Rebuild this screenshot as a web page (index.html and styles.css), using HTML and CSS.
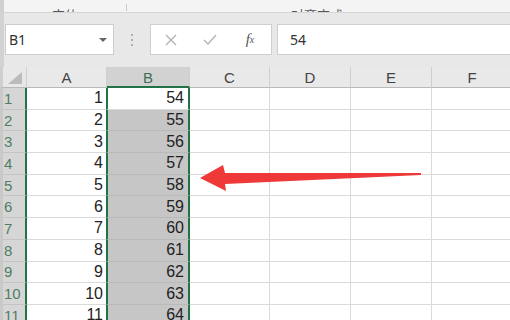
FILE: index.html
```html
<!DOCTYPE html>
<html>
<head>
<meta charset="utf-8">
<link rel="stylesheet" href="styles.css">
</head>
<body>
<div class="page">
  <div class="ribbon">
    <div class="grp grp1"><span>字体</span></div>
    <div class="rsep"></div>
    <div class="grp grp2"><span>对齐方式</span></div>
  </div>
  <div class="fbar">
    <div class="namebox"><span>B1</span><span class="caret"></span></div>
    <div class="dots"><i></i><i></i><i></i></div>
    <div class="btns">
      <span class="b b1">
        <svg width="12" height="12" viewBox="0 0 12 12"><path d="M1 1L11 11M11 1L1 11" stroke="#b3b3b3" stroke-width="1.4" fill="none"/></svg>
      </span>
      <span class="b b2">
        <svg width="14" height="11" viewBox="0 0 14 11"><path d="M1 6L5 10L13 1" stroke="#b3b3b3" stroke-width="1.4" fill="none"/></svg>
      </span>
      <span class="b b3 fx">f<sub>x</sub></span>
    </div>
    <div class="finput">54</div>
  </div>
  <div class="sheet">
    <div class="corner"><svg width="14" height="12" viewBox="0 0 14 12"><path d="M14 0L14 12L0 12Z" fill="#bcbcbc"/></svg></div>
    <div class="ch">A</div>
    <div class="ch sel">B</div>
    <div class="ch">C</div>
    <div class="ch">D</div>
    <div class="ch">E</div>
    <div class="ch">F</div>

    <div class="rh">1</div><div class="c">1</div><div class="c b act">54</div><div class="c"></div><div class="c"></div><div class="c"></div><div class="c"></div>
    <div class="rh">2</div><div class="c">2</div><div class="c b hl">55</div><div class="c"></div><div class="c"></div><div class="c"></div><div class="c"></div>
    <div class="rh">3</div><div class="c">3</div><div class="c b hl">56</div><div class="c"></div><div class="c"></div><div class="c"></div><div class="c"></div>
    <div class="rh">4</div><div class="c">4</div><div class="c b hl">57</div><div class="c"></div><div class="c"></div><div class="c"></div><div class="c"></div>
    <div class="rh">5</div><div class="c">5</div><div class="c b hl">58</div><div class="c"></div><div class="c"></div><div class="c"></div><div class="c"></div>
    <div class="rh">6</div><div class="c">6</div><div class="c b hl">59</div><div class="c"></div><div class="c"></div><div class="c"></div><div class="c"></div>
    <div class="rh">7</div><div class="c">7</div><div class="c b hl">60</div><div class="c"></div><div class="c"></div><div class="c"></div><div class="c"></div>
    <div class="rh">8</div><div class="c">8</div><div class="c b hl">61</div><div class="c"></div><div class="c"></div><div class="c"></div><div class="c"></div>
    <div class="rh">9</div><div class="c">9</div><div class="c b hl">62</div><div class="c"></div><div class="c"></div><div class="c"></div><div class="c"></div>
    <div class="rh">10</div><div class="c">10</div><div class="c b hl">63</div><div class="c"></div><div class="c"></div><div class="c"></div><div class="c"></div>
    <div class="rh">11</div><div class="c">11</div><div class="c b hl">64</div><div class="c"></div><div class="c"></div><div class="c"></div><div class="c"></div>
  </div>
  <svg class="arrow" width="510" height="320" viewBox="0 0 510 320">
    <polygon points="200,178 223,165 225,173 421,173 421,175 225,184 226,191" fill="#ef3838"/>
  </svg>
</div>
</body>
</html>
```
FILE: styles.css
```css
* { box-sizing: border-box; }
html, body { margin: 0; padding: 0; }
body {
  width: 510px;
  height: 320px;
  overflow: hidden;
  background: #e8e8e8;
  font-family: "Liberation Sans", Arial, sans-serif;
}
.page {
  position: relative;
  width: 510px;
  height: 320px;
  overflow: hidden;
}
.ribbon {
  height: 13px;
  display: flex;
  background: #f4f4f4;
  border-bottom: 1px solid #d5d5d5;
  border-left: 4px solid #cfcfcf;
  overflow: hidden;
}
.grp {
  display: flex;
  justify-content: center;
  align-items: flex-end;
  font-family: "Noto Sans CJK SC", sans-serif;
  font-size: 13px;
  color: #555;
  line-height: 13px;
}
.grp span { margin-bottom: -9px; }
.grp1 { width: 122px; }
.rsep { width: 1px; height: 7px; margin-top: 4px; background: #c9c9c9; }
.grp2 { width: 380px; }

.fbar {
  height: 54px;
  display: flex;
  align-items: flex-start;
  padding-top: 11px;
  border-left: 4px solid #d2d2d2;
  background: #e8e8e8;
}
.namebox {
  margin-left: 1px;
  width: 109px;
  height: 31px;
  background: #fff;
  border: 1px solid #cdcdcd;
  display: flex;
  align-items: center;
  justify-content: space-between;
  padding: 0 6px 0 3px;
  font-family: "Noto Sans", sans-serif;
  font-size: 14px;
  color: #333;
}
.caret {
  width: 0; height: 0;
  border-left: 4px solid transparent;
  border-right: 4px solid transparent;
  border-top: 4px solid #666;
}
.dots {
  width: 36px;
  height: 31px;
  display: flex;
  flex-direction: column;
  align-items: center;
  justify-content: center;
  gap: 3px;
}
.dots i { width: 2px; height: 2px; background: #adadad; display: block; }
.btns {
  width: 122px;
  height: 31px;
  background: #fff;
  border: 1px solid #cfcfcf;
  display: flex;
  align-items: center;
}
.b { display: flex; justify-content: center; align-items: center; height: 100%; }
.b1 { width: 40px; }
.b2 { width: 38px; }
.b3 { width: 42px; }
.fx {
  font-family: "Liberation Serif", serif;
  font-style: italic;
  font-size: 15px;
  color: #555;
}
.fx sub { font-size: 10px; vertical-align: -1px; }
.finput {
  margin-left: 5px;
  flex: 1;
  height: 31px;
  background: #fff;
  border: 1px solid #cfcfcf;
  border-right: none;
  display: flex;
  align-items: center;
  padding-left: 12px;
  font-family: "Noto Sans", sans-serif;
  font-size: 14px;
  color: #333;
}

.sheet {
  display: grid;
  grid-template-columns: 27px 80px 83px 80px 81px 81px 81px;
  grid-template-rows: 21px repeat(11, 21.7px);
  background: #fff;
}
.corner {
  background: #e8e8e8;
  border-bottom: 1px solid #b8b8b8;
  border-right: 1px solid #cfcfcf;
  border-left: 3px solid #cfcfcf;
  display: flex;
  align-items: flex-end;
  justify-content: flex-end;
  padding: 0 4px 3px 0;
}
.ch {
  background: #e9e9e9;
  border-bottom: 1px solid #b8b8b8;
  border-right: 1px solid #cfcfcf;
  display: flex;
  align-items: center;
  justify-content: center;
  font-size: 15px;
  color: #444;
  padding-top: 1px;
}
.ch.sel {
  background: #d2d2d2;
  color: #3c6f52;
  border-bottom: 2px solid #217346;
}
.rh {
  background: #d6d6d6;
  border-left: 3px solid #c9c9c9;
  border-right: 2px solid #217346;
  border-bottom: 1px solid #c4c4c4;
  font-size: 15px;
  color: #4f7e63;
  display: flex;
  align-items: center;
  padding-left: 1px;
  overflow: hidden;
  line-height: 1;
}
.c {
  border-bottom: 1px solid #dadada;
  border-right: 1px solid #dadada;
  display: flex;
  align-items: center;
  justify-content: flex-end;
  padding-right: 3px;
  font-size: 16px;
  color: #222;
  line-height: 1;
}
.c.b {
  border-left: 2px solid #217346;
  border-right: 2px solid #217346;
  margin-left: -1px;
  padding-right: 4px;
}
.c.hl { background: #c6c6c6; border-bottom-color: #b9b9b9; }
.arrow {
  position: absolute;
  left: 0;
  top: 0;
  pointer-events: none;
}
```
